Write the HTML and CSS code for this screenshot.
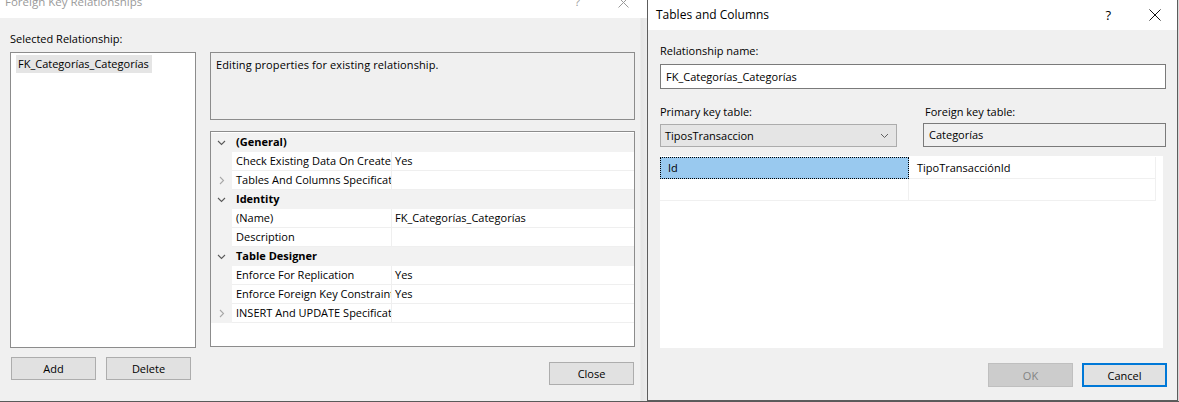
FILE: index.html
```html
<!DOCTYPE html>
<html>
<head>
<meta charset="utf-8">
<link rel="stylesheet" href="styles.css">
</head>
<body>
<div class="screen">
  <div class="dlg-left">
    <div class="titlebar-l">
      <span class="title-l">Foreign Key Relationships</span>
      <span class="help-l">?</span>
      <svg class="close-l" width="11" height="11" viewBox="0 0 11 11"><path d="M0.5 0.5L10.5 10.5M10.5 0.5L0.5 10.5" stroke="#9a9a9a" stroke-width="1" fill="none"/></svg>
    </div>
    <div class="lbody">
      <div class="lcol">
        <div class="label">Selected Relationship:</div>
        <div class="listbox">
          <div class="list-item">FK_Categorías_Categorías</div>
        </div>
        <div class="btnrow">
          <button class="btn">Add</button>
          <button class="btn">Delete</button>
        </div>
      </div>
      <div class="rcol">
        <div class="desc">Editing properties for existing relationship.</div>
        <div class="pgrid">
          <div class="prow cat"><span class="mg"><svg width="9" height="6" viewBox="0 0 9 6"><path d="M1 1L4.5 4.5L8 1" stroke="#5a5a5a" stroke-width="1.1" fill="none"/></svg></span><span class="cname">(General)</span></div>
          <div class="prow"><span class="mg"></span><span class="pname">Check Existing Data On Create Or Re-Enabling</span><span class="pval">Yes</span></div>
          <div class="prow"><span class="mg"><svg width="6" height="9" viewBox="0 0 6 9"><path d="M1 1L4.5 4.5L1 8" stroke="#a8a8a8" stroke-width="1.1" fill="none"/></svg></span><span class="pname">Tables And Columns Specification</span><span class="pval"></span></div>
          <div class="prow cat"><span class="mg"><svg width="9" height="6" viewBox="0 0 9 6"><path d="M1 1L4.5 4.5L8 1" stroke="#5a5a5a" stroke-width="1.1" fill="none"/></svg></span><span class="cname">Identity</span></div>
          <div class="prow"><span class="mg"></span><span class="pname">(Name)</span><span class="pval">FK_Categorías_Categorías</span></div>
          <div class="prow"><span class="mg"></span><span class="pname">Description</span><span class="pval"></span></div>
          <div class="prow cat"><span class="mg"><svg width="9" height="6" viewBox="0 0 9 6"><path d="M1 1L4.5 4.5L8 1" stroke="#5a5a5a" stroke-width="1.1" fill="none"/></svg></span><span class="cname">Table Designer</span></div>
          <div class="prow"><span class="mg"></span><span class="pname">Enforce For Replication</span><span class="pval">Yes</span></div>
          <div class="prow"><span class="mg"></span><span class="pname">Enforce Foreign Key Constraint</span><span class="pval">Yes</span></div>
          <div class="prow"><span class="mg"><svg width="6" height="9" viewBox="0 0 6 9"><path d="M1 1L4.5 4.5L1 8" stroke="#a8a8a8" stroke-width="1.1" fill="none"/></svg></span><span class="pname">INSERT And UPDATE Specification</span><span class="pval"></span></div>
        </div>
        <div class="closerow">
          <button class="btn">Close</button>
        </div>
      </div>
    </div>
  </div>
  <div class="dlg-right">
    <div class="titlebar-r">
      <span class="title-r">Tables and Columns</span>
      <span class="help-r">?</span>
      <svg class="close-r" width="12" height="12" viewBox="0 0 12 12"><path d="M0.5 0.5L11.5 11.5M11.5 0.5L0.5 11.5" stroke="#111" stroke-width="1" fill="none"/></svg>
    </div>
    <div class="rbody">
      <div class="label">Relationship name:</div>
      <div class="textbox">FK_Categorías_Categorías</div>
      <div class="keyrow">
        <div class="keycol pk">
          <div class="label">Primary key table:</div>
          <div class="combo"><span>TiposTransaccion</span><svg width="9" height="6" viewBox="0 0 9 6"><path d="M1 1L4.5 4.5L8 1" stroke="#606060" stroke-width="1" fill="none"/></svg></div>
        </div>
        <div class="keycol fk">
          <div class="label">Foreign key table:</div>
          <div class="rotext">Categorías</div>
        </div>
      </div>
      <div class="kgrid">
        <div class="krow">
          <div class="kcell sel">Id</div>
          <div class="kcell">TipoTransacciónId</div>
        </div>
        <div class="krow">
          <div class="kcell"></div>
          <div class="kcell"></div>
        </div>
      </div>
      <div class="okrow">
        <button class="btn disabled">OK</button>
        <button class="btn default">Cancel</button>
      </div>
    </div>
  </div>
  <div class="edge"></div>
</div>
<div class="strip"></div>
</body>
</html>
```

FILE: styles.css
```css
* { box-sizing: border-box; }
html, body { margin: 0; padding: 0; }
body {
  width: 1179px;
  height: 402px;
  overflow: hidden;
  background: #f0f0f0;
  font-family: "Open Sans", "Noto Sans", sans-serif;
  font-size: 11px;
  color: #000;
}
.screen {
  display: flex;
  height: 401px;
}
/* ---------- left dialog ---------- */
.dlg-left {
  width: 647px;
  display: flex;
  flex-direction: column;
}
.titlebar-l {
  height: 18px;
  background: #fff;
  display: flex;
  align-items: flex-start;
  overflow: hidden;
  color: #9a9a9a;
  font-size: 11.5px;
}
.title-l {
  margin-left: 5px;
  margin-top: -6px;
  line-height: 16px;
}
.help-l {
  margin-left: auto;
  margin-top: -6px;
  line-height: 16px;
  width: 10px;
}
.close-l {
  margin-left: 33px;
  margin-right: 18px;
  margin-top: -3px;
}
.lbody {
  flex: 1;
  display: flex;
  padding-left: 10px;
  background: linear-gradient(to right, #f0f0f0 640px, #e4e4e4 641px, #ececec 647px);
}
.lcol {
  width: 186px;
  display: flex;
  flex-direction: column;
  padding-top: 13px;
}
.label {
  line-height: 16px;
  height: 16px;
  white-space: nowrap;
}
.listbox {
  margin-top: 5px;
  height: 296px;
  background: #fff;
  border: 1px solid #8c8c8c;
  padding: 2px 0 0 5px;
}
.list-item {
  display: inline-block;
  background: #e5e5e5;
  line-height: 18px;
  padding: 0 3px 0 2px;
}
.btnrow {
  display: flex;
  gap: 10px;
  margin-top: 9px;
  padding-left: 1px;
}
.btn {
  width: 85px;
  height: 23px;
  background: #e1e1e1;
  border: 1px solid #adadad;
  font-family: inherit;
  font-size: 11px;
  color: #000;
  padding: 0;
}
.rcol {
  width: 425px;
  margin-left: 14px;
  padding-top: 34px;
  display: flex;
  flex-direction: column;
}
.desc {
  height: 68px;
  border: 1px solid #8c8c8c;
  padding: 3px 5px;
  line-height: 18px;
  letter-spacing: 0.1px;
}
.pgrid {
  margin-top: 11px;
  height: 216px;
  background: #fff;
  border: 1px solid #8c8c8c;
  padding-top: 1px;
}
.prow {
  display: grid;
  grid-template-columns: 21px 160px 1fr;
  height: 19px;
  line-height: 18px;
}
.prow.cat {
  grid-template-columns: 21px 1fr;
  background: #f2f2f2;
  font-weight: bold;
}
.mg {
  background: #f2f2f2;
  display: flex;
  align-items: center;
  justify-content: center;
}
.cname {
  padding-left: 4px;
}
.pname {
  padding-left: 4px;
  white-space: nowrap;
  overflow: hidden;
  border-right: 1px solid #efefef;
  border-bottom: 1px solid #efefef;
}
.pval {
  padding-left: 3px;
  white-space: nowrap;
  overflow: hidden;
  border-bottom: 1px solid #efefef;
}
.closerow {
  display: flex;
  justify-content: flex-end;
  margin-top: 15px;
  padding-right: 1px;
}
/* ---------- right dialog ---------- */
.dlg-right {
  width: 531px;
  border: 1px solid #5c5c5c;
  border-top: none;
  display: flex;
  flex-direction: column;
  background: #f0f0f0;
}
.titlebar-r {
  height: 30px;
  background: #fff;
  display: flex;
  align-items: center;
  font-size: 12px;
}
.title-r {
  margin-left: 8px;
  margin-top: -1px;
}
.help-r {
  margin-left: auto;
  font-size: 13px;
}
.close-r {
  margin-left: 38px;
  margin-right: 16px;
}
.rbody {
  flex: 1;
  padding: 13px 0 0 12px;
  display: flex;
  flex-direction: column;
}
.textbox {
  margin-top: 5px;
  width: 506px;
  height: 25px;
  border: 1px solid #7a7a7a;
  background: #fff;
  padding-left: 5px;
  line-height: 23px;
}
.keyrow {
  display: flex;
  margin-top: 15px;
}
.keycol.pk { width: 237px; }
.keycol.fk { width: 243px; margin-left: 26px; }
.keycol.fk .label { padding-left: 2px; }
.combo {
  margin-top: 4px;
  height: 23px;
  background: #e5e5e5;
  border: 1px solid #acacac;
  display: flex;
  align-items: center;
  justify-content: space-between;
  padding: 0 7px 0 4px;
}
.rotext {
  margin-top: 3px;
  height: 24px;
  background: #f0f0f0;
  border: 1px solid #7a7a7a;
  padding-left: 5px;
  line-height: 22px;
}
.kgrid {
  margin-top: 9px;
  width: 503px;
  height: 192px;
  background: #fff;
  padding-top: 1px;
}
.krow {
  display: grid;
  grid-template-columns: 249px 247px;
  height: 22px;
}
.kcell {
  border-right: 1px solid #f0f0f0;
  border-bottom: 1px solid #f0f0f0;
  line-height: 21px;
  padding-left: 8px;
}
.kcell.sel {
  background: #99c9ef;
  outline: 1px dotted #000;
  outline-offset: -1px;
  border-color: transparent;
}
.okrow {
  display: flex;
  justify-content: flex-end;
  gap: 9px;
  margin-top: 15px;
  padding-right: 10px;
}
.okrow .btn { height: 24px; }
.btn.disabled {
  background: #cccccc;
  border-color: #bfbfbf;
  color: #838383;
}
.btn.default {
  border: 2px solid #0078d7;
}
.edge {
  width: 1px;
  background: #d9d9d9;
}
.strip {
  height: 1px;
  background: #5a5a5a;
}
```
